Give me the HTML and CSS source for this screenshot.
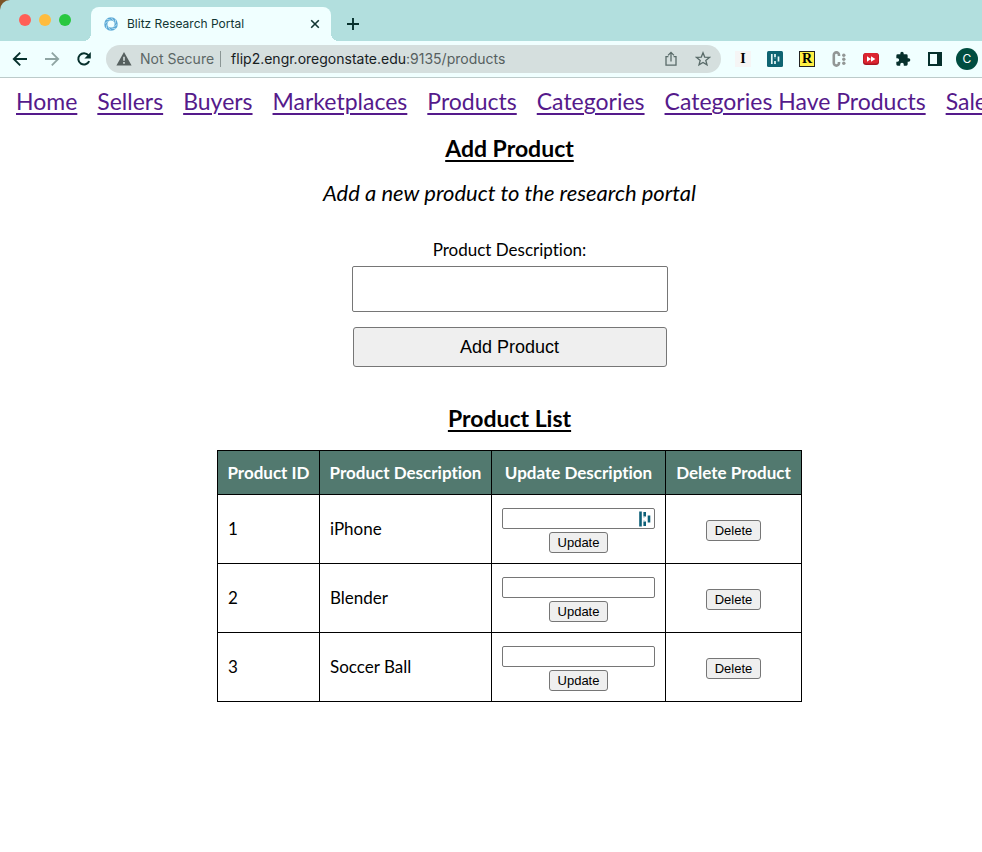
FILE: index.html
```html
<!DOCTYPE html>
<html lang="en">
<head>
<meta charset="utf-8">
<title>Blitz Research Portal</title>
<link rel="stylesheet" href="styles.css">
</head>
<body>
<header class="browser">
  <div class="tab-strip">
    <div class="lights"><span class="light red"></span><span class="light amber"></span><span class="light green"></span></div>
    <div class="tab">
      <svg class="favicon" viewBox="0 0 14 14" width="14" height="14" aria-hidden="true"><circle cx="7" cy="7" r="5.200" fill="none" stroke="#5ba9d6" stroke-width="3.200"/><path d="M7 .4 9.800 4M11.700 2.300 11 6.500M13.600 7 10.200 9.800M11.700 11.700 7.500 11M7 13.600 4.200 10M2.300 11.700 3 7.500M.4 7 3.800 4.200M2.300 2.300 6.500 3" stroke="#c4e4f3" stroke-width=".8"/></svg>
      <span class="tab-title">Blitz Research Portal</span>
      <button class="icon-button tab-close" type="button" aria-label="Close tab"><svg viewBox="0 0 10 10" width="10" height="10"><path d="M1.2 1.2 8.8 8.8M8.8 1.2 1.2 8.8" stroke="#123633" stroke-width="1.6"/></svg></button>
    </div>
    <button class="icon-button new-tab" type="button" aria-label="New tab"><svg viewBox="0 0 12 12" width="12" height="12"><path d="M6 0v12M0 6h12" stroke="#06302c" stroke-width="1.9"/></svg></button>
  </div>
  <div class="toolbar">
    <div class="history">
      <button class="icon-button" type="button" aria-label="Back"><svg viewBox="0 0 16 16" width="16" height="16"><path d="M15 8H2.2M8.2 1.6 1.8 8l6.4 6.4" fill="none" stroke="#06302c" stroke-width="1.9"/></svg></button>
      <button class="icon-button" type="button" aria-label="Forward"><svg viewBox="0 0 16 16" width="16" height="16"><path d="M1 8h12.8M7.8 1.6 14.2 8l-6.4 6.4" fill="none" stroke="#8fa5a3" stroke-width="1.8"/></svg></button>
      <button class="icon-button" type="button" aria-label="Reload"><svg viewBox="0 0 16 16" width="16" height="16"><path d="M13.2 10.2A5.7 5.7 0 1 1 12.4 4.2" fill="none" stroke="#06302c" stroke-width="2"/><path d="M14.8 1v6.4H8.4z" fill="#06302c"/></svg></button>
    </div>
    <div class="address">
      <svg viewBox="0 0 16 14" width="16" height="14" aria-hidden="true"><path d="M8 0 15.6 13.6H.4z" fill="#56605f"/><path d="M8 4.8v4M8 10v1.8" stroke="#d5dfde" stroke-width="1.6"/></svg>
      <span class="security">Not Secure</span>
      <span class="url" role="textbox" aria-label="Address">flip2.engr.oregonstate.edu<span class="path">:9135/products</span></span>
      <button class="icon-button share" type="button" aria-label="Share"><svg viewBox="0 0 14 16" width="14" height="16"><path d="M4.4 5.6H2v8.6h10V5.6H9.6M7 10.4V1.8M4 4.4l3-3 3 3" fill="none" stroke="#596b69" stroke-width="1.3"/></svg></button>
      <button class="icon-button" type="button" aria-label="Bookmark"><svg viewBox="0 0 16 16" width="16" height="16"><path d="m8 1.8 1.7 4.3 4.7.3-3.6 3 1.2 4.5L8 11.4l-4 2.5 1.2-4.5-3.6-3 4.7-.3z" fill="none" stroke="#596b69" stroke-width="1.3"/></svg></button>
    </div>
    <div class="extensions">
      <button class="icon-button instapaper" type="button">I</button>
      <button class="icon-button" type="button" aria-label="Dashlane"><svg viewBox="0 0 16 16" width="16" height="16"><rect width="16" height="16" rx="1.5" fill="#0e6472"/><path d="M4.8 3v10M8 3v3M8 10v3M11.5 5.5v5" stroke="#e7f7f7" stroke-width="1.7"/><path d="M8 6.2v1.5" stroke="#8dbcc2"/></svg></button>
      <button class="icon-button rakuten" type="button">R</button>
      <button class="icon-button" type="button" aria-label="Citation helper"><svg viewBox="0 0 16 16" width="16" height="16"><path d="M8 5V4a2.600 2.600 0 0 0-5.200 0v8A2.600 2.600 0 0 0 8 12v-1" fill="none" stroke="#929796" stroke-width="2.6"/><g fill="#929796"><circle cx="12.800" cy="4.200" r="1.700"/><circle cx="12.800" cy="8.200" r="1.700"/><circle cx="12.800" cy="12.200" r="1.700"/></g></svg></button>
      <button class="icon-button" type="button" aria-label="Video speed"><svg viewBox="0 0 16 16" width="16" height="16"><rect y="2" width="16" height="12" rx="3" fill="#a91420"/><rect x=".5" y="2" width="15" height="10.5" rx="3" fill="#dc2530"/><path d="M4 5.2 8 8l-4 2.8zM8 5.2 12.4 8 8 10.8z" fill="#fff"/></svg></button>
      <button class="icon-button" type="button" aria-label="Extensions"><svg viewBox="0 0 24 24" width="16" height="16"><path d="M20.5 11H19V7a2 2 0 0 0-2-2h-4V3.500a2.500 2.500 0 0 0-5 0V5H4a2 2 0 0 0-2 2v3.800h1.500a2.700 2.700 0 0 1 0 5.400H2V20a2 2 0 0 0 2 2h3.800v-1.500a2.700 2.700 0 0 1 5.400 0V22H17a2 2 0 0 0 2-2v-4h1.500a2.500 2.500 0 0 0 0-5z" fill="#06302c"/></svg></button>
      <button class="icon-button" type="button" aria-label="Side panel"><svg viewBox="0 0 14 14" width="14" height="14"><path d="M0 0h14v14H0zM2 2v10h7V2z" fill="#06302c" fill-rule="evenodd"/></svg></button>
      <button class="icon-button avatar" type="button">C</button>
    </div>
  </div>
</header>
<nav class="site-nav">
  <a href="#home">Home</a>
  <a href="#sellers">Sellers</a>
  <a href="#buyers">Buyers</a>
  <a href="#marketplaces">Marketplaces</a>
  <a href="#products">Products</a>
  <a href="#categories">Categories</a>
  <a href="#categories-products">Categories Have Products</a>
  <a href="#sales">Sales</a>
</nav>
<main class="content">
  <h2>Add Product</h2>
  <p class="intro">Add a new product to the research portal</p>
  <form class="add-form">
    <label for="description">Product Description:</label>
    <input id="description" type="text">
    <button type="button">Add Product</button>
  </form>
  <h2>Product List</h2>
  <table class="products">
    <colgroup><col class="col-id"><col class="col-description"><col class="col-update"><col class="col-delete"></colgroup>
    <thead>
      <tr><th>Product ID</th><th>Product Description</th><th>Update Description</th><th>Delete Product</th></tr>
    </thead>
    <tbody>
      <tr>
        <td>1</td><td>iPhone</td>
        <td><form class="update"><div class="field"><input type="text" aria-label="New description for iPhone"><svg class="autofill" viewBox="0 0 12 16" width="12" height="16" aria-hidden="true"><path d="M1.500 .5v15M5.700 1v4.500M5.700 10.500v4.500M10 4.500v7" stroke="#0e6078" stroke-width="2.600"/><path d="M5 5.500v1.500M5 9v1.500" stroke="#a7c8d0" stroke-width="1"/></svg></div><button type="button">Update</button></form></td>
        <td class="action"><button type="button">Delete</button></td>
      </tr>
      <tr>
        <td>2</td><td>Blender</td>
        <td><form class="update"><div class="field"><input type="text" aria-label="New description for Blender"></div><button type="button">Update</button></form></td>
        <td class="action"><button type="button">Delete</button></td>
      </tr>
      <tr>
        <td>3</td><td>Soccer Ball</td>
        <td><form class="update"><div class="field"><input type="text" aria-label="New description for Soccer Ball"></div><button type="button">Update</button></form></td>
        <td class="action"><button type="button">Delete</button></td>
      </tr>
    </tbody>
  </table>
</main>
</body>
</html>
```
FILE: styles.css
```css
* { box-sizing: border-box; }

body {
  margin: 0;
  overflow-x: hidden;
  background: #fff;
  color: #000;
  font-family: Lato, sans-serif;
  font-size: 17px;
  font-variant-ligatures: none;
  line-height: 24px;
}

/* Browser window */
.browser {
  background: #7c5426;
  font-family: Inter, sans-serif;
  border-bottom: 1px solid #bccbca;
}

.icon-button {
  display: flex;
  flex: none;
  align-items: center;
  justify-content: center;
  width: 16px;
  height: 16px;
  padding: 0;
  border: 0;
  background: none;
}

.icon-button svg { flex: none; }

.tab-strip {
  display: flex;
  align-items: flex-end;
  height: 41px;
  background: #b2dfde;
  border-top-left-radius: 10px;
}

.lights {
  display: flex;
  gap: 8px;
  width: 91px;
  padding: 0 0 15px 19px;
}

.light {
  width: 12px;
  height: 12px;
  border-radius: 50%;
}

.red { background: #ff5f57; }
.amber { background: #febc3e; }
.green { background: #28c840; }

.tab {
  position: relative;
  display: flex;
  align-items: center;
  width: 240px;
  height: 34px;
  padding: 0 8px 0 13px;
  background: #f0ffff;
  border-radius: 8px 8px 0 0;
}

.tab::before,
.tab::after {
  content: "";
  position: absolute;
  bottom: 0;
  width: 8px;
  height: 8px;
}

.tab::before {
  right: 100%;
  background: radial-gradient(circle at 0 0, #b2dfde 8px, #f0ffff 8px);
}

.tab::after {
  left: 100%;
  background: radial-gradient(circle at 100% 0, #b2dfde 8px, #f0ffff 8px);
}

.tab-title {
  flex: 1;
  margin-left: 9px;
  color: #123633;
  font-size: 12px;
  line-height: 16px;
}

.new-tab { margin: 0 0 9px 14px; }

.toolbar {
  display: flex;
  align-items: center;
  height: 36px;
  background: #f0ffff;
}

.history {
  display: flex;
  gap: 16px;
  padding: 0 14px 0 12px;
}

.address {
  display: flex;
  flex: 1;
  align-items: center;
  height: 28px;
  padding: 0 10px;
  background: #d5dfde;
  border-radius: 14px;
  font-size: 14px;
  line-height: 16px;
  white-space: nowrap;
}

.security {
  margin-left: 8px;
  padding-right: 6px;
  border-right: 1px solid #8b9695;
  color: #5c6766;
}

.url {
  flex: 1;
  margin-left: 10px;
  color: #17201f;
}

.path { color: #56605f; }
.share { margin-right: 16px; }

.extensions {
  display: flex;
  align-items: center;
  gap: 16px;
  padding: 0 4px 0 14px;
}

.instapaper,
.rakuten {
  background: #f5f5f5;
  color: #000;
  font: bold 14px/16px "Liberation Serif", serif;
}

.rakuten {
  border: 1px solid #222;
  background: #fff044;
}

.avatar {
  width: 22px;
  height: 22px;
  margin-left: -3px;
  border-radius: 50%;
  background: #004d40;
  color: #fff;
  font: 12px/22px Inter, sans-serif;
}

/* Page */
.site-nav {
  display: flex;
  gap: 20px;
  padding: 8px 16px 0;
  font-size: 23px;
  line-height: 30px;
  white-space: nowrap;
}

.site-nav a { color: #551a8b; }

.site-nav a,
h2 {
  text-decoration: underline;
  text-decoration-thickness: 2px;
  text-underline-offset: 3px;
}

.content {
  display: flex;
  flex-direction: column;
  align-items: center;
  padding: 17px 0 32px 37px;
}

h2 {
  margin: 0;
  font-size: 23px;
  line-height: 30px;
}

.intro {
  margin: 16px 0 31px;
  font-size: 22px;
  font-style: italic;
  line-height: 28px;
}

.add-form {
  display: flex;
  flex-direction: column;
  align-items: center;
  margin-bottom: 36px;
}

input,
button {
  font-family: "Liberation Sans", sans-serif;
}

.content input {
  border: 1px solid #767676;
  border-radius: 2px;
  background: #fff;
}

.content button {
  border: 1px solid #767676;
  border-radius: 3px;
  background: #efefef;
  color: #000;
}

.add-form input {
  width: 316px;
  height: 46px;
  margin: 4px 0 15px;
  font-size: 18px;
}

.add-form button {
  width: 314px;
  height: 40px;
  font-size: 18px;
}

.products {
  margin-top: 17px;
  border-collapse: collapse;
  table-layout: fixed;
  width: 585px;
}

.col-id { width: 102px; }
.col-description { width: 172px; }
.col-update { width: 174px; }
.col-delete { width: 136px; }

.products th,
.products td {
  padding: 0 10px;
  border: 1px solid #000;
  text-align: left;
}

.products th {
  height: 44px;
  padding: 0;
  background: #52796f;
  color: #fff;
  text-align: center;
  white-space: nowrap;
}

.products td { height: 69px; }

.update {
  display: flex;
  flex-direction: column;
  align-items: center;
  gap: 3px;
  padding-top: 2px;
}

.field { position: relative; }

.field input {
  display: block;
  width: 153px;
  height: 21px;
}

.autofill {
  position: absolute;
  top: 3px;
  right: 4px;
}

.products button {
  height: 21px;
  padding: 0 8px;
  font-size: 13px;
  line-height: 15px;
}

.products .action {
  text-align: center;
  line-height: 21px;
}
```
